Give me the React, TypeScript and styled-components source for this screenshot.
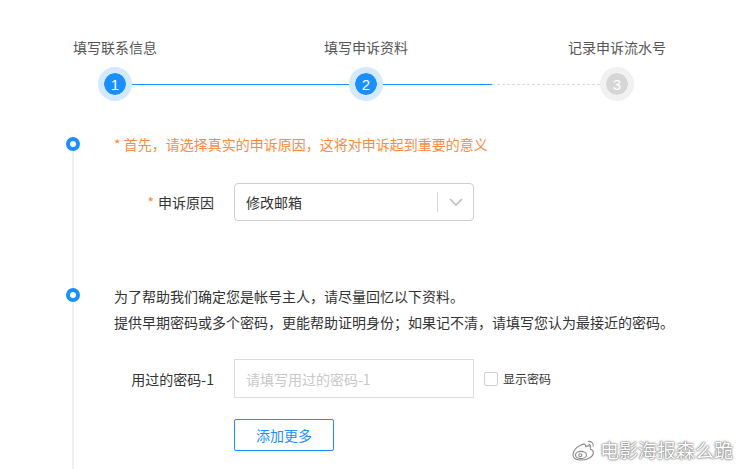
import React from "react";
import styled, { createGlobalStyle } from "styled-components";

const GlobalStyle = createGlobalStyle`
  html, body { margin: 0; padding: 0; background: #fff; }
  body {
    font-family: "Noto Sans CJK SC", "Noto Sans", "Liberation Sans", sans-serif;
    color: #333;
  }
  * { box-sizing: border-box; }
`;

const BLUE = "#1a8fff";
const ORANGE = "#ff8a3d";

const Page = styled.div`
  position: relative;
  min-height: 100vh;
  display: flex;
  flex-direction: column;
  padding-top: 37px;
  overflow: hidden;
`;

const StepsRow = styled.div`
  display: flex;
  align-items: flex-start;
  margin-left: 98px;
  width: 536px;
`;

const Step = styled.div`
  width: 34px;
  display: flex;
  flex-direction: column;
  align-items: center;
  gap: 10px;
`;

const StepLabel = styled.div`
  white-space: nowrap;
  font-size: 14px;
  line-height: 20px;
  color: #555;
`;

const StepCircle = styled.div<{ $done: boolean }>`
  width: 34px;
  height: 34px;
  border-radius: 50%;
  border: 6px solid ${(p) => (p.$done ? "#d3e9fd" : "#f1f1f1")};
  background: ${(p) => (p.$done ? BLUE : "#d6d6d6")};
  background-clip: padding-box;
  display: flex;
  align-items: center;
  justify-content: center;
  color: #fff;
  font-family: "Liberation Sans", Arial, sans-serif;
  font-size: 15px;
  line-height: 1;
`;

const Connector = styled.div`
  flex: 1;
  margin-top: 47px;
  display: flex;
`;

const Segment = styled.div<{ $active: boolean }>`
  flex: 1;
  height: 0;
  border-top: 1px ${(p) => (p.$active ? "solid" : "dashed")}
    ${(p) => (p.$active ? BLUE : "#dcdcdc")};
`;

const Timeline = styled.div`
  position: relative;
  flex: 1;
  margin-top: 33px;
  padding-bottom: 18px;
  &::before {
    content: "";
    position: absolute;
    left: 72px;
    top: 10px;
    bottom: 0;
    width: 2px;
    background: #f0f0f0;
  }
`;

const Section = styled.div<{ $gap?: number }>`
  position: relative;
  padding-left: 114px;
  margin-top: ${(p) => p.$gap ?? 0}px;
`;

const Dot = styled.span<{ $top: number }>`
  position: absolute;
  left: 66px;
  top: ${(p) => p.$top}px;
  width: 14px;
  height: 14px;
  border-radius: 50%;
  border: 4px solid ${BLUE};
  background: #fff;
`;

const Notice = styled.div`
  font-size: 14px;
  line-height: 20px;
  color: ${ORANGE};
`;

const Intro = styled.div`
  font-size: 14px;
  line-height: 26px;
  color: #333;
`;

const FormRow = styled.div<{ $gap: number }>`
  display: grid;
  grid-template-columns: 100px auto;
  column-gap: 20px;
  align-items: center;
  margin-top: ${(p) => p.$gap}px;
  margin-left: -114px;
  padding-left: 114px;
`;

const Label = styled.label`
  text-align: right;
  font-size: 14px;
  line-height: 20px;
  color: #333;
  white-space: nowrap;
`;

const Star = styled.span`
  color: ${ORANGE};
  margin-right: 4px;
`;

const FieldLine = styled.div`
  display: flex;
  align-items: center;
`;

const Select = styled.div`
  width: 240px;
  height: 38px;
  border: 1px solid #cfcfcf;
  border-radius: 4px;
  display: flex;
  align-items: center;
`;

const SelectValue = styled.span`
  flex: 1;
  padding-left: 11px;
  font-size: 14px;
  color: #333;
`;

const Indicator = styled.span`
  width: 36px;
  height: 20px;
  border-left: 1px solid #d6d6d6;
  display: flex;
  align-items: center;
  justify-content: center;
`;

const TextInput = styled.input`
  width: 240px;
  height: 39px;
  border: 1px solid #dcdcdc;
  border-radius: 0;
  padding: 0 11px;
  font-family: inherit;
  font-size: 14px;
  color: #333;
  outline: none;
  &::placeholder { color: #c8c8c8; }
`;

const CheckLabel = styled.label`
  display: flex;
  align-items: center;
  margin-left: 10px;
  font-size: 12px;
  color: #333;
  gap: 5px;
`;

const CheckBox = styled.span`
  width: 14px;
  height: 14px;
  border: 1px solid #cfcfcf;
  border-radius: 2px;
  background: #fff;
`;

const AddButton = styled.button`
  grid-column: 2;
  width: 100px;
  height: 32px;
  border: 1px solid ${BLUE};
  border-radius: 2px;
  background: #fff;
  color: ${BLUE};
  font-family: inherit;
  font-size: 14px;
  padding: 0;
`;

const Watermark = styled.div`
  position: absolute;
  right: 7px;
  bottom: 7px;
  display: flex;
  align-items: center;
  gap: 3px;
  color: #fff;
  font-size: 19px;
  line-height: 24px;
  text-shadow: 0 0 1px #666, 0 0 2px #888, 0 0 3px #aaa;
`;

const steps = [
  { label: "填写联系信息", done: true },
  { label: "填写申诉资料", done: true },
  { label: "记录申诉流水号", done: false },
];

const Chevron = () => (
  <svg width="14" height="8" viewBox="0 0 14 8">
    <polyline points="1,1 7,7 13,1" fill="none" stroke="#bdbdbd" strokeWidth="1.6" />
  </svg>
);

const WeiboLogo = () => (
  <svg width="27" height="24" viewBox="0 0 27 24">
    <g fill="#fff" stroke="#8a8a8a" strokeWidth="1.1">
      <path d="M3 17c0-4 4-8 8-10 3-1.5 5-1 4.5 1.5 2.5-1 5-1 5 1 0 .8-.3 1.4-.1 1.8 1.8.5 3 1.6 3 3.4 0 3.7-5.3 7.3-11.5 7.3C6.6 22 3 20.2 3 17z" />
      <ellipse cx="11" cy="17" rx="5.5" ry="3.6" />
      <circle cx="10.3" cy="17.3" r="1.5" />
      <path d="M18 3.5c3-.7 6 1.8 5.2 5.2" fill="none" />
      <path d="M18.3 6.3c1.4-.3 2.6.9 2.3 2.3" fill="none" />
    </g>
  </svg>
);

export default function App() {
  return (
    <>
      <GlobalStyle />
      <Page>
        <StepsRow>
          {steps.map((s, i) => (
            <React.Fragment key={s.label}>
              {i > 0 && (
                <Connector>
                  {i === 1 ? (
                    <Segment $active />
                  ) : (
                    <>
                      <Segment $active />
                      <Segment $active={false} />
                    </>
                  )}
                </Connector>
              )}
              <Step>
                <StepLabel>{s.label}</StepLabel>
                <StepCircle $done={s.done}>{i + 1}</StepCircle>
              </Step>
            </React.Fragment>
          ))}
        </StepsRow>

        <Timeline>
          <Section>
            <Dot $top={3} />
            <Notice>* 首先，请选择真实的申诉原因，这将对申诉起到重要的意义</Notice>
            <FormRow $gap={29}>
              <Label>
                <Star>*</Star>申诉原因
              </Label>
              <Select>
                <SelectValue>修改邮箱</SelectValue>
                <Indicator>
                  <Chevron />
                </Indicator>
              </Select>
            </FormRow>
          </Section>

          <Section $gap={62}>
            <Dot $top={5} />
            <Intro>
              为了帮助我们确定您是帐号主人，请尽量回忆以下资料。
              <br />
              提供早期密码或多个密码，更能帮助证明身份；如果记不清，请填写您认为最接近的密码。
            </Intro>
            <FormRow $gap={24}>
              <Label>用过的密码-1</Label>
              <FieldLine>
                <TextInput placeholder="请填写用过的密码-1" />
                <CheckLabel>
                  <CheckBox />
                  显示密码
                </CheckLabel>
              </FieldLine>
            </FormRow>
            <FormRow $gap={21}>
              <AddButton>添加更多</AddButton>
            </FormRow>
          </Section>
        </Timeline>

        <Watermark>
          <WeiboLogo />
          <span>电影海报森么跪</span>
        </Watermark>
      </Page>
    </>
  );
}
